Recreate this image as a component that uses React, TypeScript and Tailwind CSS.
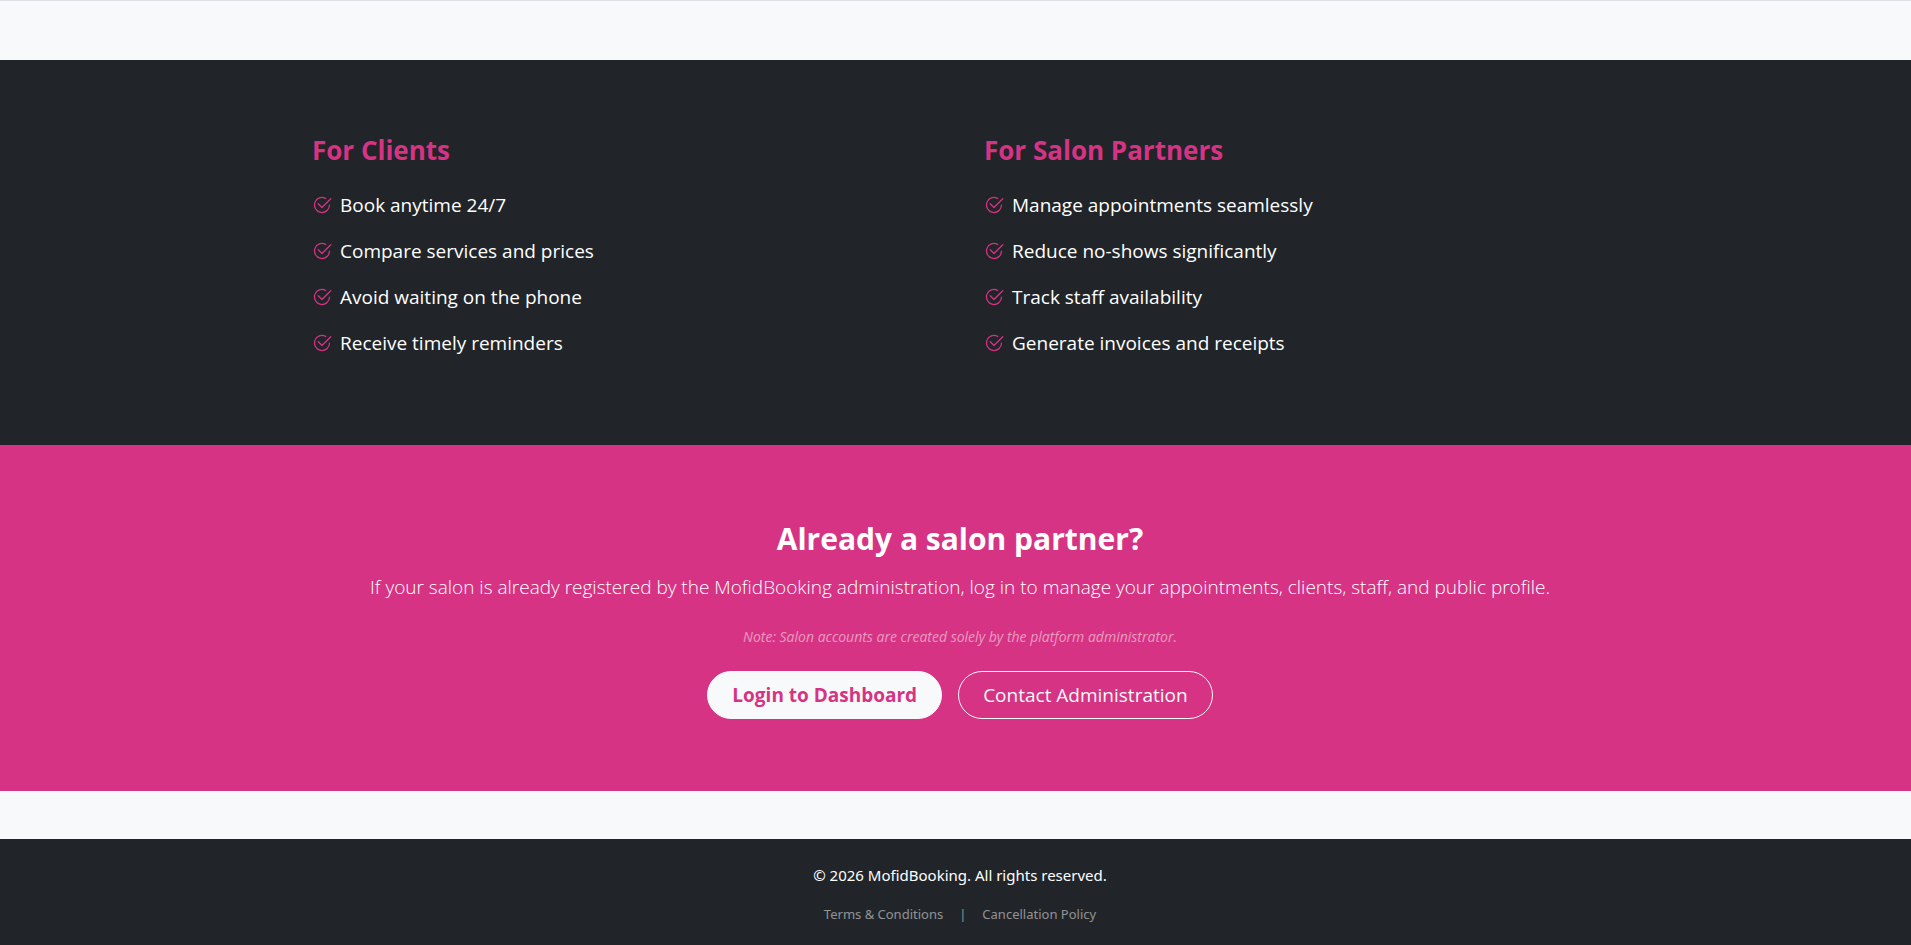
import { BsCheck2Circle } from "react-icons/bs";

const clientPerks = [
  "Book anytime 24/7",
  "Compare services and prices",
  "Avoid waiting on the phone",
  "Receive timely reminders",
];

const partnerPerks = [
  "Manage appointments seamlessly",
  "Reduce no-shows significantly",
  "Track staff availability",
  "Generate invoices and receipts",
];

function PerkList({ title, items }: { title: string; items: string[] }) {
  return (
    <div>
      <h3 className="mb-[22px] text-[26px] leading-9 font-bold text-[#d63384]">{title}</h3>
      <ul>
        {items.map((item) => (
          <li key={item} className="mb-4 flex items-center gap-2 text-[19px] leading-[30px]">
            <BsCheck2Circle className="size-5 shrink-0 text-[#d63384]" />
            <span>{item}</span>
          </li>
        ))}
      </ul>
    </div>
  );
}

export default function App() {
  return (
    <div className="min-h-screen bg-[#f8f9fa] font-['Open_Sans','Noto_Sans',sans-serif] text-white">
      <div className="h-[60px] border-t border-[#dee2e6]" />

      {/* Benefits */}
      <section className="bg-[#212529] pt-[72px] pb-[71px] pl-[9px]">
        <div className="mx-auto grid max-w-[1320px] gap-12 px-3 md:grid-cols-2">
          <PerkList title="For Clients" items={clientPerks} />
          <PerkList title="For Salon Partners" items={partnerPerks} />
        </div>
      </section>

      {/* Partner login */}
      <section className="bg-[#d63384] py-[72px] pl-[9px] text-center">
        <div className="mx-auto max-w-[1320px] px-3">
          <h2 className="mb-3 text-[30px] leading-[43px] font-bold">Already a salon partner?</h2>
          <p className="mb-6 text-[19px] leading-[30px] font-light">
            If your salon is already registered by the MofidBooking administration, log in to manage your
            appointments, clients, staff, and public profile.
          </p>
          <p className="mb-6 text-[14px] leading-[21px] text-white/50 italic">
            Note: Salon accounts are created solely by the platform administrator.
          </p>
          <div className="flex flex-wrap justify-center gap-4">
            <a
              href="#login"
              className="rounded-full border border-[#f8f9fa] bg-[#f8f9fa] px-6 py-2 text-[19px] leading-[30px] font-bold text-[#d63384]"
            >
              Login to Dashboard
            </a>
            <a
              href="#contact"
              className="rounded-full border border-[#f8f9fa] px-6 py-2 text-[19px] leading-[30px] text-[#f8f9fa]"
            >
              Contact Administration
            </a>
          </div>
        </div>
      </section>

      <footer className="mt-12 bg-[#212529] py-6 pl-[9px] text-center font-['Noto_Sans',sans-serif]">
        <p className="mb-4 text-[15px] leading-6">&copy; 2026 MofidBooking. All rights reserved.</p>
        <div className="flex justify-center gap-4 text-[13px] leading-[22px] text-white/50">
          <a href="#terms">Terms &amp; Conditions</a>
          <span>|</span>
          <a href="#cancellation">Cancellation Policy</a>
        </div>
      </footer>
    </div>
  );
}
